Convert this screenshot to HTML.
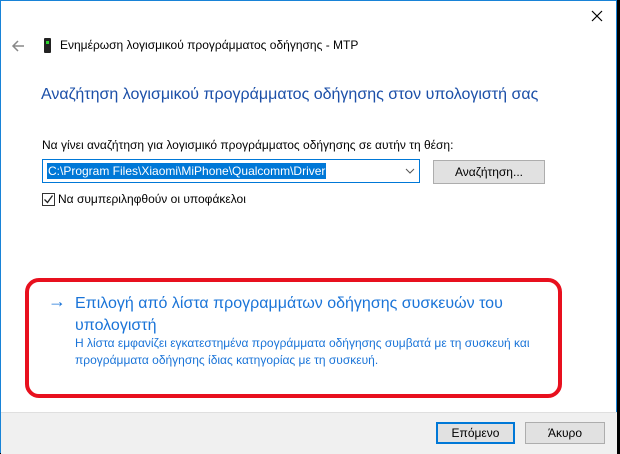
<!DOCTYPE html>
<html><head><meta charset="utf-8"><style>
*{margin:0;padding:0;box-sizing:border-box}
body{width:620px;height:453px;position:relative;background:#000;font-family:"Segoe UI","Liberation Sans","DejaVu Sans",sans-serif;overflow:hidden}
.win{position:absolute;left:0;top:0;width:617px;height:453px;background:#fff;border-top:1px solid #1883d7;border-right:1px solid #1883d7;border-left:1px solid #1883d7}
.a{position:absolute;white-space:nowrap}
.footer{position:absolute;left:0;top:411px;width:616px;height:42px;background:#f0f0f0;border-top:1px solid #dfdfdf}
.btn{position:absolute;background:#e1e1e1;border:1px solid #adadad;font-size:12px;color:#000;text-align:center}
</style></head><body>
<div class="win">
<svg class="a" style="left:589px;top:8px" width="14" height="14"><path d="M2 2L12 12M12 2L2 12" stroke="#000" stroke-width="1.2"/></svg>
<svg class="a" style="left:10px;top:38px" width="14" height="14"><path d="M13 7H2M7 2L2 7L7 12" stroke="#888" stroke-width="1.5" fill="none"/></svg>
<div class="a" style="left:43px;top:37px;width:7px;height:15px;background:#222;border-radius:1px"></div>
<div class="a" style="left:45px;top:40px;width:3px;height:3px;background:#2cd32c"></div>
<div class="a" style="left:59px;top:37px;font-size:12px;color:#000">Ενημέρωση λογισμικού προγράμματος οδήγησης - MTP</div>
<div class="a" style="left:40px;top:85px;font-size:16px;color:#1b4fa8">Αναζήτηση λογισμικού προγράμματος οδήγησης στον υπολογιστή σας</div>
<div class="a" style="left:41px;top:137px;font-size:12px;color:#000">Να γίνει αναζήτηση για λογισμικό προγράμματος οδήγησης σε αυτήν τη θέση:</div>
<div class="a" style="left:41px;top:158px;width:378px;height:24px;border:1px solid #0078d7"></div>
<div class="a" style="left:46px;top:162px;height:16px;padding:0 1px;background:#0078d7;color:#fff;font-size:12px;line-height:16px">C:\Program Files\Xiaomi\MiPhone\Qualcomm\Driver</div>
<svg class="a" style="left:404px;top:167px" width="10" height="6"><path d="M1 1L5 5L9 1" stroke="#555" fill="none"/></svg>
<div class="btn" style="left:432px;top:159px;width:112px;height:24px;line-height:22px">Αναζήτηση...</div>
<div class="a" style="left:41px;top:192px;width:13px;height:13px;border:1px solid #333"></div>
<svg class="a" style="left:42px;top:193px" width="11" height="11"><path d="M1.5 5.5L4.5 8.5L9.5 1.5" stroke="#222" stroke-width="1.3" fill="none"/></svg>
<div class="a" style="left:57px;top:191px;font-size:12px;color:#000">Να συμπεριληφθούν οι υποφάκελοι</div>
<div class="a" style="left:24px;top:277px;width:537px;height:120px;border:4px solid #e8101e;border-radius:14px"></div>
<div class="a" style="left:47px;top:290px;font-size:18px;color:#1a74d8">→</div>
<div class="a" style="left:74px;top:292px;font-size:16px;color:#1a74d8;line-height:22px;white-space:normal;width:480px">Επιλογή από λίστα προγραμμάτων οδήγησης συσκευών του υπολογιστή</div>
<div class="a" style="left:74px;top:334px;font-size:12px;color:#1a74d8;line-height:17px;white-space:normal;width:480px">Η λίστα εμφανίζει εγκατεστημένα προγράμματα οδήγησης συμβατά με τη συσκευή και προγράμματα οδήγησης ίδιας κατηγορίας με τη συσκευή.</div>
<div class="footer"></div>
<div class="btn" style="left:435px;top:421px;width:79px;height:22px;line-height:19px;border:2px solid #0078d7">Επόμενο</div>
<div class="btn" style="left:524px;top:421px;width:80px;height:22px;line-height:20px">Άκυρο</div>
</div>
</body></html>
